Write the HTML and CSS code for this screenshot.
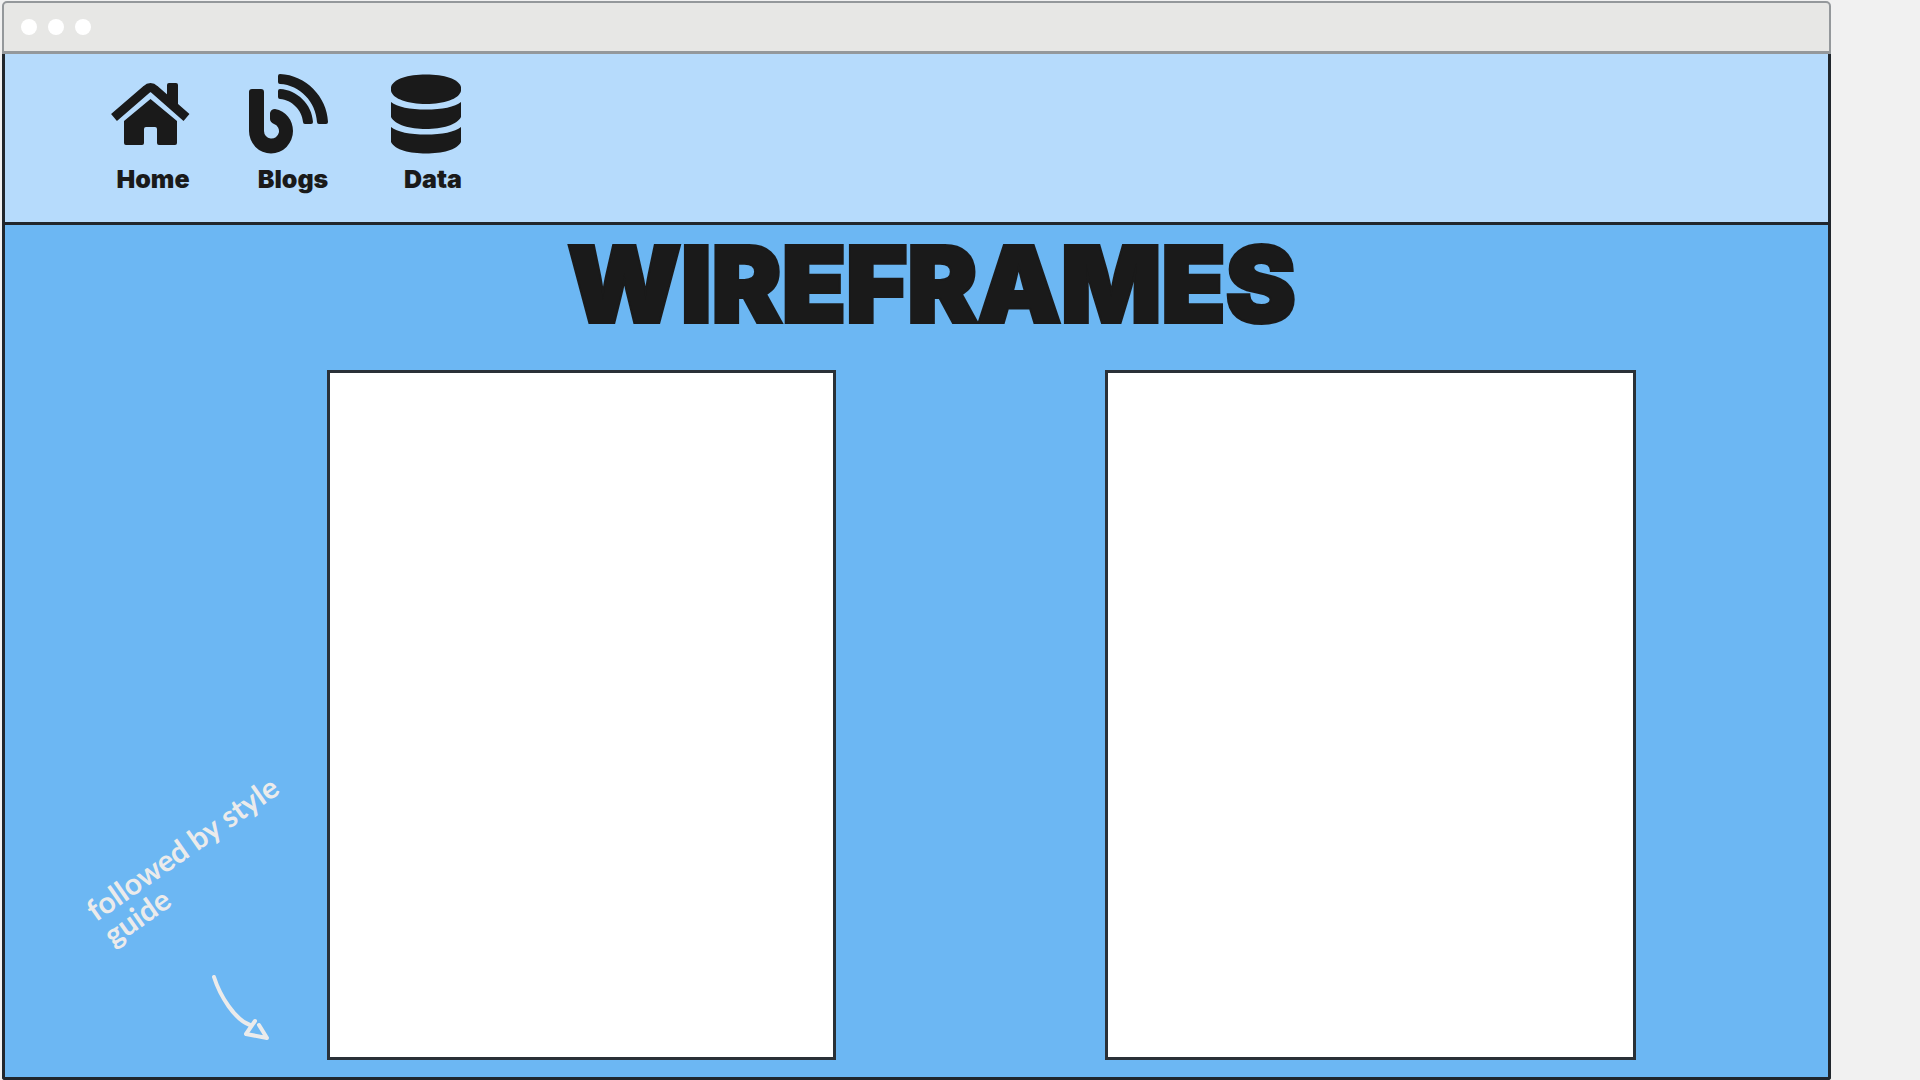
FILE: index.html
```html
<!DOCTYPE html>
<html lang="en">
<head>
<meta charset="utf-8">
<title>Wireframes</title>
<link rel="stylesheet" href="styles.css">
</head>
<body>
<div class="window">
  <div class="titlebar">
    <span class="dot"></span><span class="dot"></span><span class="dot"></span>
  </div>
  <div class="page">
    <nav class="nav">
      <a class="nav-link" href="#home">
        <svg class="nav-icon" viewBox="105 74 96 80" aria-hidden="true">
          <path d="M114 117.500L146.500 89.500Q150.500 85.500 154.500 89.500L186.500 117.500" fill="none" stroke="currentColor" stroke-width="9"/>
          <path d="M167 85q0-2 2-2h7q2 0 2 2v24l-11-9z"/>
          <path d="M150.500 99L177 121V143q0 2-2 2H159q-2 0-2-2V129q0-2-2-2h-9q-2 0-2 2v14q0 2-2 2H126q-2 0-2-2V121z"/>
        </svg>
        <span class="nav-label">Home</span>
      </a>
      <a class="nav-link" href="#blogs">
        <svg class="nav-icon" viewBox="245 74 96 80" aria-hidden="true">
          <path d="M249 92q0-3 3-3h9q3 0 3 3V131a7.500 7.500 0 1 0 10-7q-4-2-4-5V113q1-4 5-4C286 111 293 120 293 131a22 22.500 0 0 1-44 0z"/>
          <path d="M278 76q0-2 2-2C306 75 327 97 328 122q0 2-2 2h-7q-2 0-2-2C316 102 300 85 280 84q-2 0-2-2z"/>
          <path d="M278 91q0-2 2-2C297 90 312 104 313 122q0 2-2 2h-6q-2 0-2-2C302 110 292 100 280 99q-2 0-2-2z"/>
        </svg>
        <span class="nav-label">Blogs</span>
      </a>
      <a class="nav-link" href="#data">
        <svg class="nav-icon" viewBox="385 74 96 80" aria-hidden="true">
          <path d="M391 87C393 79 408 74.500 426 74.500S459 79 461 87V91C459 99 444 104 426 104S393 99 391 91z"/>
          <path d="M391 102C397 107 410 109.500 426 109.500S455 107 461 102V117C457 125 442 129 426 129S395 125 391 117z"/>
          <path d="M391 127C397 132 410 134.500 426 134.500S455 132 461 127V142C457 150 442 153.500 426 153.500S395 150 391 142z"/>
        </svg>
        <span class="nav-label">Data</span>
      </a>
    </nav>
    <main class="main">
      <h1 class="title">WIREFRAMES</h1>
      <div class="board">
        <aside class="aside">
          <p class="note">followed by style<br>guide</p>
          <svg class="arrow" viewBox="211 974 60 68" aria-hidden="true">
            <path d="M214 977C220 996 235 1020 250 1025M255 1021L246 1034L267 1038L259 1025" fill="none" stroke="currentColor" stroke-width="4" stroke-linecap="round" stroke-linejoin="round"/>
          </svg>
        </aside>
        <section class="card card-first" aria-label="Wireframe one"></section>
        <section class="card card-second" aria-label="Wireframe two"></section>
      </div>
    </main>
  </div>
</div>
</body>
</html>
```
FILE: styles.css
```css
* {
  box-sizing: border-box;
}

body {
  margin: 0;
  background: #f1f1f1;
  font-family: Inter, "Liberation Sans", sans-serif;
  color: #1a1a1a;
}

.window {
  display: flex;
  flex-direction: column;
  min-height: 100vh;
  margin-right: 89px;
  padding: 1px 0 0 2px;
}

.titlebar {
  display: flex;
  align-items: center;
  gap: 11px;
  height: 53px;
  padding: 0 17px;
  border: 2px solid #94989b;
  border-bottom-width: 3px;
  border-radius: 5px 5px 0 0;
  background: #e7e7e5;
}

.dot {
  width: 16px;
  height: 16px;
  border-radius: 50%;
  background: #fff;
}

.page {
  flex: 1;
  display: flex;
  flex-direction: column;
  border: 3px solid #20262c;
  border-top: 0;
  border-radius: 0 0 3px 3px;
}

.nav {
  display: flex;
  gap: 44px;
  padding: 20px 100px 28px;
  border-bottom: 3px solid #20262c;
  background: #b6dbfc;
}

.nav-link {
  display: flex;
  flex-direction: column;
  align-items: center;
  gap: 10px;
  width: 96px;
  color: inherit;
  text-decoration: none;
}

.nav-icon {
  width: 96px;
  height: 80px;
  fill: currentColor;
}

.nav-label {
  font-size: 25px;
  line-height: 30px;
  font-weight: 900;
}

.main {
  flex: 1;
  display: flex;
  flex-direction: column;
  padding-bottom: 17px;
  background: #6cb7f3;
}

.title {
  margin: 0;
  padding: 0 0 27px 30px;
  font-size: 105px;
  line-height: 118px;
  font-weight: 900;
  text-align: center;
  -webkit-text-stroke: 4px #1a1a1a;
  paint-order: stroke fill;
}

.board {
  flex: 1;
  display: grid;
  grid-template-columns: 322px 509fr 269px 531fr 192px;
}

.card {
  border: 3px solid #2a3138;
  background: #fff;
}

.card-first {
  grid-column: 2;
}

.card-second {
  grid-column: 4;
}

.aside {
  display: flex;
  flex-direction: column;
  justify-content: flex-end;
  padding-bottom: 18px;
  color: #ebebeb;
}

.note {
  width: 240px;
  margin: 0 0 88px 71px;
  font-family: Lato, "Open Sans", sans-serif;
  font-size: 30px;
  line-height: 30px;
  font-weight: 700;
  white-space: nowrap;
  transform: rotate(-35deg);
}

.arrow {
  width: 60px;
  height: 68px;
  margin-left: 206px;
}
```
